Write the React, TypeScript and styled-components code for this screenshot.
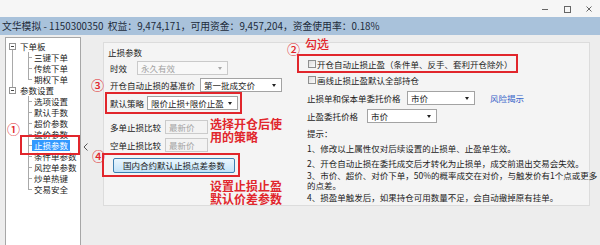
import React from "react";
import styled, { createGlobalStyle } from "styled-components";

const RED = "#e1262c";

const GlobalStyle = createGlobalStyle`
	html, body {
		margin: 0;
		padding: 0;
		background: #ededed;
	}
	body {
		font-family: "Noto Sans CJK SC", "Liberation Sans", sans-serif;
	}
	* {
		box-sizing: border-box;
	}
`;

const Window = styled.div`
	width: 600px;
	height: 245px;
	overflow: hidden;
	background: #ededed;
	color: #1b1b1b;
	font-size: 8.5px;
`;

const TitleBar = styled.div`
	height: 17px;
	background: #f6f6f6;
	display: flex;
	justify-content: flex-end;
	align-items: center;
`;

const WinButton = styled.div`
	width: 22px;
	height: 17px;
	display: flex;
	align-items: center;
	justify-content: center;
	color: #666;
`;

const InfoBar = styled.div`
	height: 18px;
	background: #a9c2db;
	padding-left: 2px;
	font-size: 9.8px;
	line-height: 18px;
	color: #1d2b3a;
	white-space: nowrap;
`;

const Body = styled.div`
	position: relative;
	height: 210px;
	display: flex;
	align-items: flex-start;
`;

/* ---- tree ---- */

const Tree = styled.div`
	margin: 2px 0 0 5px;
	width: 76px;
	height: 215px;
	flex-shrink: 0;
	background: #fff;
	border: 1px solid #a7a7a7;
	padding-top: 3px;
	line-height: 11px;
`;

const TreeGroup = styled.div<{ $connect?: boolean }>`
	position: relative;

	&::before {
		content: "";
		display: ${({ $connect }) => ($connect ? "block" : "none")};
		position: absolute;
		left: 6px;
		top: 8px;
		bottom: -2px;
		width: 1px;
		background: #a9a9a9;
	}
`;

const TreeParent = styled.div`
	height: 11px;
	display: flex;
	align-items: center;
	padding-left: 3px;
	white-space: nowrap;
`;

const Expander = styled.span`
	width: 7px;
	height: 7px;
	border: 1px solid #939393;
	background: #fff;
	margin-right: 4px;
	position: relative;

	&::after {
		content: "";
		position: absolute;
		left: 1px;
		right: 1px;
		top: 2px;
		height: 1px;
		background: #444;
	}
`;

const TreeChildren = styled.div`
	position: relative;
	margin-left: 22px;

	&::before {
		content: "";
		position: absolute;
		left: 0;
		top: 0;
		bottom: 5px;
		width: 1px;
		background: #a9a9a9;
	}
`;

const TreeItem = styled.div`
	position: relative;
	height: 11px;
	padding-left: 4px;
	white-space: nowrap;

	&::before {
		content: "";
		position: absolute;
		left: 0;
		top: 5px;
		width: 4px;
		height: 1px;
		background: #a9a9a9;
	}
`;

const TreeLabel = styled.span<{ $selected?: boolean }>`
	display: inline-block;
	height: 11px;
	padding: 0 2px;
	background: ${({ $selected }) => ($selected ? "#3399ff" : "transparent")};
	color: ${({ $selected }) => ($selected ? "#fff" : "#1b1b1b")};
`;

const Splitter = styled.div`
	width: 22px;
	flex-shrink: 0;
	padding: 106px 0 0 2px;
`;

/* ---- settings panel ---- */

const Panel = styled.div`
	margin-top: 7px;
	width: 487px;
	height: 164px;
	background: #f4f4f4;
	border: 1px solid #dcdcdc;
	display: flex;
`;

const MiddleCol = styled.div`
	width: 186px;
	flex-shrink: 0;
	padding: 3px 0 0 4px;
`;

const GroupTitle = styled.div`
	height: 12px;
	line-height: 12px;
	color: #222;
`;

const FieldRow = styled.div<{ $mt?: number; $pl?: number; $h?: number }>`
	display: flex;
	align-items: center;
	height: ${({ $h }) => $h ?? 14}px;
	margin-top: ${({ $mt }) => $mt ?? 0}px;
	padding-left: ${({ $pl }) => $pl ?? 0}px;
	white-space: nowrap;
`;

const FieldLabel = styled.span<{ $w: number }>`
	width: ${({ $w }) => $w}px;
	flex-shrink: 0;
	line-height: 12px;
`;

const Combo = styled.div<{ $w: number; $disabled?: boolean }>`
	position: relative;
	width: ${({ $w }) => $w}px;
	height: 14px;
	flex-shrink: 0;
	border: 1px solid ${({ $disabled }) => ($disabled ? "#cacaca" : "#a3a3a3")};
	background: ${({ $disabled }) => ($disabled ? "#f8f8f8" : "#fff")};
	color: ${({ $disabled }) => ($disabled ? "#a2a2a2" : "#1b1b1b")};
	padding-left: 3px;
	line-height: 12px;

	&::after {
		content: "";
		position: absolute;
		right: 5px;
		top: 5px;
		border-left: 2.5px solid transparent;
		border-right: 2.5px solid transparent;
		border-top: 3px solid ${({ $disabled }) => ($disabled ? "#a8a8a8" : "#222")};
	}
`;

const TextBox = styled.div`
	width: 43px;
	height: 14px;
	flex-shrink: 0;
	border: 1px solid #cbcbcb;
	background: #f3f3f3;
	color: #a3a3a3;
	padding-left: 3px;
	line-height: 12px;
`;

const RedBox = styled.div<{ $w: number; $h: number; $ml: number; $mt?: number; $pad: string }>`
	width: ${({ $w }) => $w}px;
	height: ${({ $h }) => $h}px;
	margin-left: ${({ $ml }) => $ml}px;
	margin-top: ${({ $mt }) => $mt ?? 0}px;
	padding: ${({ $pad }) => $pad};
	border: 2px solid ${RED};
`;

const CompareBlock = styled.div`
	display: flex;
	align-items: flex-start;
`;

const CompareRows = styled.div`
	display: flex;
	flex-direction: column;
`;

const Note = styled.div<{ $ml: number; $mt: number }>`
	margin-left: ${({ $ml }) => $ml}px;
	margin-top: ${({ $mt }) => $mt}px;
	color: ${RED};
	font-size: 12px;
	line-height: 12.5px;
	font-weight: 600;
	white-space: nowrap;
`;

const ActionButton = styled.div`
	width: 122px;
	height: 15px;
	border: 1px solid #3c7fb1;
	border-radius: 2px;
	background: linear-gradient(#eaf6fd, #c2e3f9);
	text-align: center;
	line-height: 13px;
	color: #1a1a1a;
`;

const RightCol = styled.div`
	flex: 1;
	padding-left: 17px;
`;

const CheckRow = styled.div<{ $ml?: number; $mt?: number }>`
	display: flex;
	align-items: center;
	height: 10px;
	margin-left: ${({ $ml }) => $ml ?? 0}px;
	margin-top: ${({ $mt }) => $mt ?? 0}px;
	white-space: nowrap;
	line-height: 10px;
`;

const CheckBox = styled.span`
	width: 8px;
	height: 8px;
	flex-shrink: 0;
	border: 1px solid #8e8f8f;
	background: linear-gradient(135deg, #dcdcdc, #fbfbfb);
	margin-right: 1px;
`;

const LinkText = styled.span`
	margin-left: 15px;
	color: #3563c9;
	line-height: 12px;
`;

const TipText = styled.div<{ $mt: number }>`
	margin-top: ${({ $mt }) => $mt}px;
	line-height: 10px;
	white-space: nowrap;
	color: #222;
`;

/* ---- red annotations laid over the dialog ---- */

const Marker = styled.span<{ $x: number; $y: number; $size?: number }>`
	position: absolute;
	left: ${({ $x }) => $x}px;
	top: ${({ $y }) => $y}px;
	color: ${RED};
	font-size: ${({ $size }) => $size ?? 13}px;
	line-height: 13px;
	font-weight: 500;
	white-space: nowrap;
`;

const MarkBox = styled.div<{ $x: number; $y: number; $w: number; $h: number }>`
	position: absolute;
	left: ${({ $x }) => $x}px;
	top: ${({ $y }) => $y}px;
	width: ${({ $w }) => $w}px;
	height: ${({ $h }) => $h}px;
	border: 2px solid ${RED};
`;

const orderItems = ["三键下单", "传统下单", "期权下单"];
const paramItems = [
	"选项设置",
	"默认手数",
	"超价参数",
	"追价参数",
	"止损参数",
	"条件单参数",
	"风控单参数",
	"炒单热键",
	"交易安全",
];

const App: React.FC = () => {
	return (
		<Window>
			<GlobalStyle />
			<TitleBar>
				<WinButton>
					<svg width="8" height="8" viewBox="0 0 8 8">
						<line x1="1" y1="4.5" x2="7" y2="4.5" stroke="#666" strokeWidth="1" />
					</svg>
				</WinButton>
				<WinButton>
					<svg width="8" height="8" viewBox="0 0 8 8">
						<rect x="1.5" y="1.5" width="6" height="6" fill="none" stroke="#666" strokeWidth="1" />
					</svg>
				</WinButton>
				<WinButton>
					<svg width="8" height="8" viewBox="0 0 8 8">
						<path d="M1.5 1.5 L6.5 6.5 M6.5 1.5 L1.5 6.5" stroke="#666" strokeWidth="1" />
					</svg>
				</WinButton>
			</TitleBar>
			<InfoBar>
				文华模拟 - 1150300350&nbsp; 权益：9,474,171，可用资金：9,457,204，资金使用率：0.18%
			</InfoBar>
			<Body>
				<Tree>
					<TreeGroup $connect>
						<TreeParent>
							<Expander />
							下单板
						</TreeParent>
						<TreeChildren>
							{orderItems.map((item) => (
								<TreeItem key={item}>
									<TreeLabel>{item}</TreeLabel>
								</TreeItem>
							))}
						</TreeChildren>
					</TreeGroup>
					<TreeGroup>
						<TreeParent>
							<Expander />
							参数设置
						</TreeParent>
						<TreeChildren>
							{paramItems.map((item) => (
								<TreeItem key={item}>
									<TreeLabel $selected={item === "止损参数"}>{item}</TreeLabel>
								</TreeItem>
							))}
						</TreeChildren>
					</TreeGroup>
				</Tree>
				<Splitter>
					<svg width="6" height="8" viewBox="0 0 6 8">
						<polyline points="4.5,0.5 1,4 4.5,7.5" fill="none" stroke="#555" strokeWidth="1" />
					</svg>
				</Splitter>
				<Panel>
					<MiddleCol>
						<GroupTitle>止损参数</GroupTitle>
						<FieldRow $mt={3} $pl={2}>
							<FieldLabel $w={27}>时效</FieldLabel>
							<Combo $w={91} $disabled>
								永久有效
							</Combo>
						</FieldRow>
						<FieldRow $mt={3} $pl={2}>
							<FieldLabel $w={90}>开仓自动止损的基准价</FieldLabel>
							<Combo $w={82}>第一批成交价</Combo>
						</FieldRow>
						<RedBox $w={137} $h={22} $ml={-3} $pad="0 0 0 3px">
							<FieldRow $mt={2}>
								<FieldLabel $w={37}>默认策略</FieldLabel>
								<Combo $w={91}>限价止损+限价止盈</Combo>
							</FieldRow>
						</RedBox>
						<CompareBlock>
							<CompareRows>
								<FieldRow $mt={6} $pl={2}>
									<FieldLabel $w={55}>多单止损比较</FieldLabel>
									<TextBox>最新价</TextBox>
								</FieldRow>
								<FieldRow $mt={4} $pl={2}>
									<FieldLabel $w={55}>空单止损比较</FieldLabel>
									<TextBox>最新价</TextBox>
								</FieldRow>
							</CompareRows>
							<Note $ml={2} $mt={4}>
								选择开仓后使
								<br />
								用的策略
							</Note>
						</CompareBlock>
						<RedBox $w={138} $h={24} $ml={-6} $mt={1} $pad="3px 0 0 9px">
							<ActionButton>国内合约默认止损点差参数</ActionButton>
						</RedBox>
						<Note $ml={102} $mt={3}>
							设置止损止盈
							<br />
							默认价差参数
						</Note>
					</MiddleCol>
					<RightCol>
						<RedBox $w={221} $h={19} $ml={-10} $mt={11} $pad="3px 0 0 9px">
							<CheckRow>
								<CheckBox />
								开仓自动止损止盈（条件单、反手、套利开仓除外）
							</CheckRow>
						</RedBox>
						<CheckRow $ml={1} $mt={2}>
							<CheckBox />
							画线止损止盈默认全部持仓
						</CheckRow>
						<FieldRow $mt={6} $h={13}>
							<FieldLabel $w={100}>止损单和保本单委托价格</FieldLabel>
							<Combo $w={68}>市价</Combo>
							<LinkText>风险揭示</LinkText>
						</FieldRow>
						<FieldRow $mt={5} $h={13}>
							<FieldLabel $w={60}>止盈委托价格</FieldLabel>
							<Combo $w={70}>市价</Combo>
						</FieldRow>
						<TipText $mt={6}>提示：</TipText>
						<TipText $mt={5}>1、修改以上属性仅对后续设置的止损单、止盈单生效。</TipText>
						<TipText $mt={5}>2、开仓自动止损在委托成交后才转化为止损单，成交前退出交易会失效。</TipText>
						<TipText $mt={2}>
							3、市价、超价、对价下单，50%的概率成交在对价，与触发价有1个点或更多
							<br />
							的点差。
						</TipText>
						<TipText $mt={2}>4、损盈单触发后，如果持仓可用数量不足，会自动撤掉原有挂单。</TipText>
					</RightCol>
				</Panel>

				<Marker $x={7} $y={87}>①</Marker>
				<MarkBox $x={20} $y={100} $w={60} $h={20} />
				<Marker $x={91} $y={43}>③</Marker>
				<Marker $x={92} $y={114}>④</Marker>
				<Marker $x={287} $y={7}>②</Marker>
				<Marker $x={305} $y={2} $size={12}>
					勾选
				</Marker>
			</Body>
		</Window>
	);
};

export default App;
